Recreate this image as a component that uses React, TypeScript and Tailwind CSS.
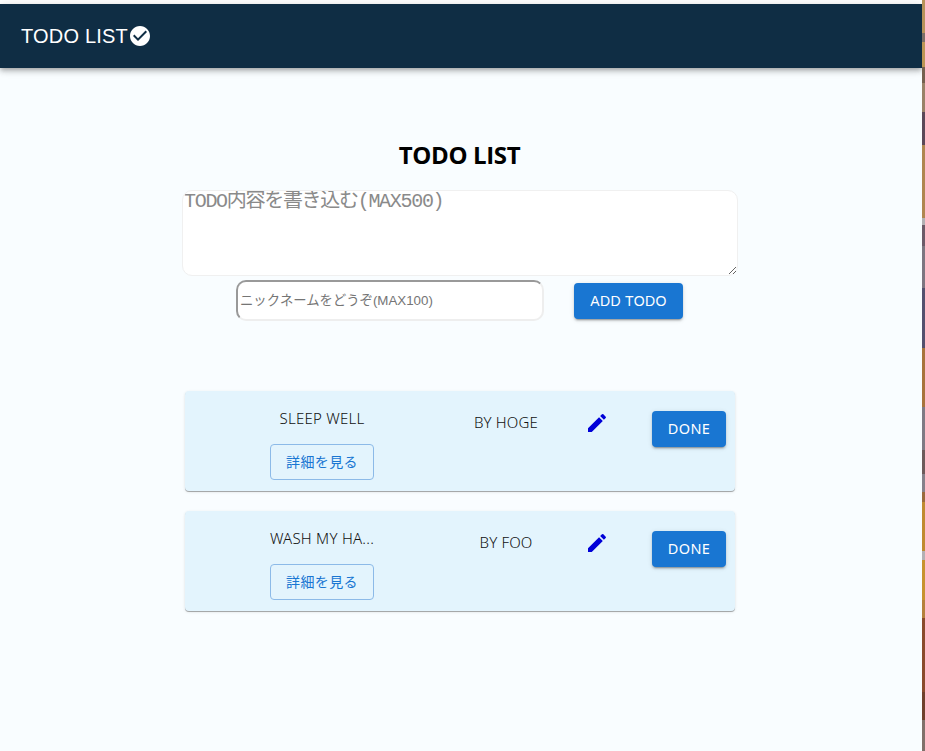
import { CSSProperties } from 'react';

const stripColors: [number, string][] = [
  [33, '#b8935a'],
  [9, '#7d6f66'],
  [25, '#bd9655'],
  [16, '#75604f'],
  [29, '#9a8268'],
  [33, '#5b4858'],
  [73, '#b08650'],
  [7, '#b3b0b3'],
  [21, '#6d5a68'],
  [42, '#7d7580'],
  [60, '#54506e'],
  [59, '#a8733c'],
  [43, '#7f7a84'],
  [24, '#6e5a5a'],
  [18, '#86808a'],
  [10, '#9a6a3c'],
  [49, '#c08a30'],
  [9, '#b4b0b4'],
  [40, '#c8922e'],
  [18, '#b5803c'],
  [74, '#8a4a2c'],
  [28, '#70402c'],
  [31, '#80706a'],
];

function DetailButton() {
  return (
    <button className="h-9 w-[104px] rounded border border-[#8cbae8] text-sm tracking-[0.4px] text-[#1976d2] [font-family:'Open_Sans','Noto_Sans_CJK_JP',sans-serif]">
      詳細を見る
    </button>
  );
}

function DoneButton() {
  return (
    <button className="h-9 w-[74px] rounded bg-[#1976d2] text-[14.5px] tracking-[0.4px] text-white shadow-[0_3px_1px_-2px_rgba(0,0,0,0.2),0_2px_2px_0_rgba(0,0,0,0.14),0_1px_5px_0_rgba(0,0,0,0.12)] [font-family:'Noto_Sans',sans-serif]">
      DONE
    </button>
  );
}

function EditIcon() {
  return (
    <svg viewBox="0 0 24 24" className="h-6 w-6 fill-[#0000d8]">
      <path d="M3 17.25V21h3.75L17.81 9.94l-3.75-3.75L3 17.25zM20.71 7.04c.39-.39.39-1.02 0-1.41l-2.34-2.34a.9959.9959 0 0 0-1.41 0l-1.83 1.83 3.75 3.75 1.83-1.83z" />
    </svg>
  );
}

function TodoCard({ title, author }: { title: string; author: string }) {
  return (
    <div className="flex h-[100px] w-[550px] rounded bg-[#e3f4fd] text-[15px] font-light text-[#111111] shadow-[0_1px_0_rgba(0,0,0,0.28),0_1px_3px_rgba(0,0,0,0.12)] [font-family:'Noto_Sans',sans-serif]">
      <div className="flex w-[274px] flex-col items-center pt-[17px]">
        <div className="h-[20px] leading-[20px] tracking-[0.25px] whitespace-nowrap">{title}</div>
        <div className="mt-[16px] font-normal">
          <DetailButton />
        </div>
      </div>
      <div className="w-[94px] pt-[21px] text-center leading-[20px] tracking-[0.15px]">{author}</div>
      <div className="flex w-[88px] justify-center pt-[20px]">
        <EditIcon />
      </div>
      <div className="pl-[11px] pt-[20px] font-normal">
        <DoneButton />
      </div>
    </div>
  );
}

export default function App() {
  return (
    <div className="flex h-[751px] w-[925px] overflow-hidden bg-white">
      <div className="flex min-w-0 flex-1 flex-col bg-[#f9fdff]">
        <div className="h-1 bg-white" />
        <header className="flex h-16 items-center bg-[#0f2d44] pl-[21px] text-white shadow-[0_2px_4px_-1px_rgba(0,0,0,0.2),0_4px_5px_0_rgba(0,0,0,0.14),0_1px_10px_0_rgba(0,0,0,0.12)]">
          <span className="text-xl tracking-[0.2px] [font-family:'Liberation_Sans',sans-serif]">TODO LIST</span>
          <svg viewBox="0 0 24 24" className="h-6 w-6 fill-white">
            <path d="M12 2C6.48 2 2 6.48 2 12s4.48 10 10 10 10-4.48 10-10S17.52 2 12 2zm-2 15-5-5 1.41-1.41L10 14.17l7.59-7.59L19 8l-9 9z" />
          </svg>
        </header>

        <main className="flex flex-col items-center pt-[69px]">
          <h1 className="h-9 w-full pr-[3px] text-center text-2xl leading-9 font-bold tracking-[-0.35px] text-black [font-family:'Open_Sans',sans-serif]">
            TODO LIST
          </h1>
          <textarea
            placeholder="TODO内容を書き込む(MAX500)"
            className="mt-[17px] ml-[-2px] block h-[86px] w-[556px] rounded-[10px] border border-[#f0f0f0] bg-white px-px py-px text-xl leading-[20px] tracking-[-1.3px] outline-none placeholder:text-[#8a8a8a] [font-family:'Liberation_Mono','Noto_Sans_CJK_JP',monospace]"
          />
          <div className="ml-[-3px] flex items-center pt-1">
            <input
              placeholder="ニックネームをどうぞ(MAX100)"
              className="h-[41px] w-[308px] rounded-[10px] border-2 border-t-[#999999] border-r-[#eeeeee] border-b-[#eeeeee] border-l-[#999999] bg-white px-0.5 text-[13.33px] outline-none placeholder:text-[#757575] [font-family:'Liberation_Sans','Noto_Sans_CJK_JP',sans-serif]"
            />
            <button className="ml-[30px] h-9 w-[109px] rounded bg-[#1976d2] text-sm tracking-[0.4px] text-white shadow-[0_3px_1px_-2px_rgba(0,0,0,0.2),0_2px_2px_0_rgba(0,0,0,0.14),0_1px_5px_0_rgba(0,0,0,0.12)] [font-family:'Liberation_Sans',sans-serif]">
              ADD TODO
            </button>
          </div>
          <div className="mt-[70px] ml-[-2px] flex flex-col gap-5">
            <TodoCard title="SLEEP WELL" author="BY HOGE" />
            <TodoCard title="WASH MY HA..." author="BY FOO" />
          </div>
        </main>
      </div>
      <div className="flex w-[3px] flex-col">
        {stripColors.map(([height, color], i) => {
          const style: CSSProperties = { height, flexShrink: 0, backgroundColor: color };
          return <div key={i} style={style} />;
        })}
      </div>
    </div>
  );
}
